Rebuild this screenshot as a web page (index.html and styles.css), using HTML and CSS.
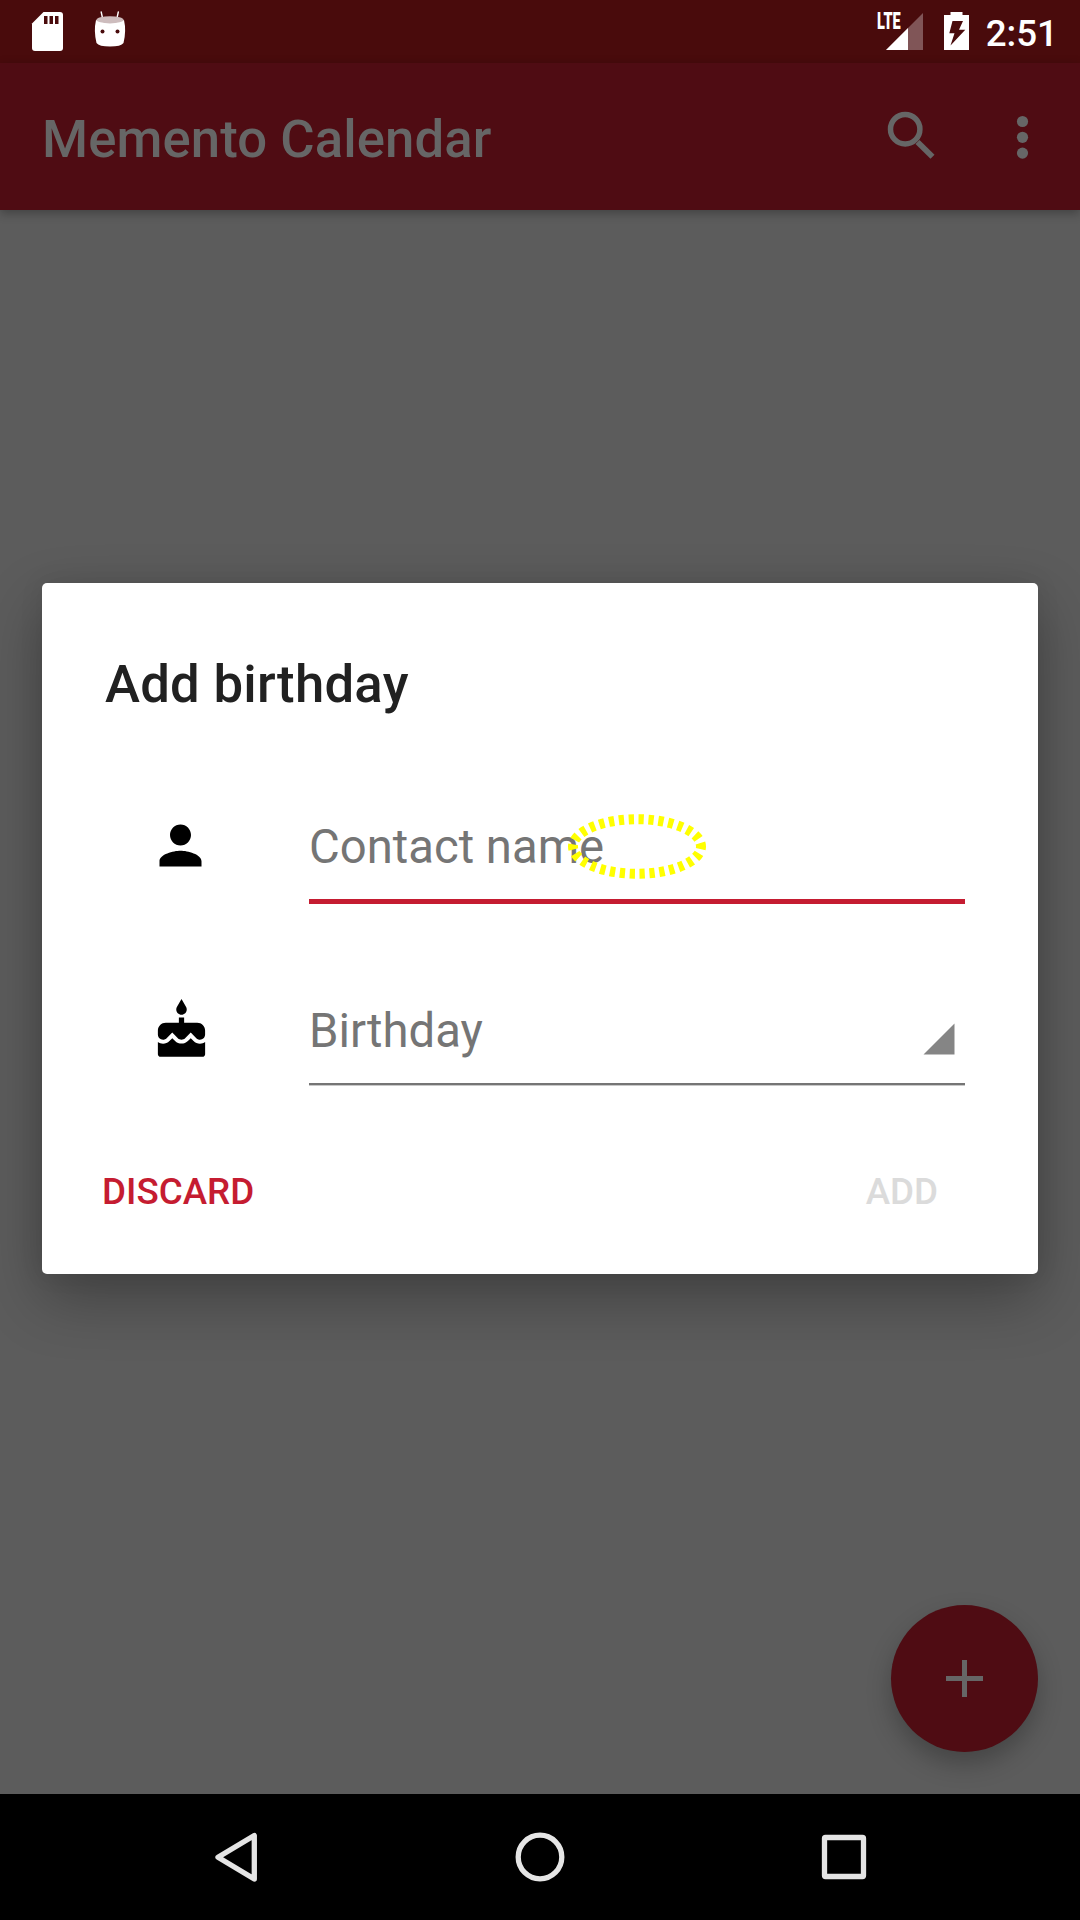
FILE: index.html
```html
<!DOCTYPE html>
<html lang="en">
<head>
<meta charset="utf-8">
<title>Memento Calendar</title>
<link rel="stylesheet" href="styles.css">
</head>
<body>
<div class="screen">
  <header class="status-bar">
    <div class="status-group notifications">
      <svg class="icon-sd" viewBox="0 0 31 39"><path d="M11.5 0H28q3 0 3 3v33q0 3-3 3H3q-3 0-3-3V11.500z" fill="#fff"/><path d="M12 4h3.500v8H12zM17.500 4H21v8h-3.500zM23 4h3.500v8H23z" fill="#490b0c"/></svg>
      <svg class="icon-droid" viewBox="0 0 32 36"><path d="M7.200 1l1.500 7M24.300 1l-1.500 7" stroke="#fff" stroke-width="1.400" stroke-linecap="round"/><path d="M2 9Q16 14.500 30 9Q32.500 20 29.500 32Q27 35.500 16 35.500T2.500 32Q-.5 20 2 9z" fill="#fff"/><ellipse cx="16" cy="8.800" rx="13.500" ry="3.600" fill="#cdbcbd"/><circle cx="8.500" cy="20.500" r="2" fill="#490b0c"/><circle cx="23.500" cy="20.500" r="2" fill="#490b0c"/></svg>
    </div>
    <div class="status-group system">
      <div class="signal">
        <svg viewBox="0 0 37 37"><path d="M0 37L37 0v37z" fill="#805557"/><path d="M0 37l22-22v22z" fill="#fff"/></svg>
        <span class="network">LTE</span>
      </div>
      <svg class="icon-battery" viewBox="0 0 25 38"><path d="M6.500 0h12v3H25v35H0V3h6.500z" fill="#fff"/><path d="M8.500 9H19l-4 8.700h6.300L6.500 33.500l4-12.300H5.300z" fill="#490b0c"/></svg>
      <span class="clock">2:51</span>
    </div>
  </header>
  <div class="app-bar">
    <h1 class="app-title">Memento Calendar</h1>
    <div class="actions">
      <svg class="icon-search" viewBox="0 0 48 48"><circle cx="17.700" cy="17.700" r="14.700" fill="none" stroke="#666" stroke-width="5.500"/><path d="M30 30.500L45 45.200" fill="none" stroke="#666" stroke-width="5.800"/></svg>
      <svg class="icon-more" viewBox="0 0 12 44"><g fill="#666"><circle cx="6" cy="6" r="5.600"/><circle cx="6" cy="21.800" r="5.600"/><circle cx="6" cy="37.600" r="5.600"/></g></svg>
    </div>
  </div>
  <main class="content">
    <section class="dialog">
      <h2 class="dialog-title">Add birthday</h2>
      <div class="row">
        <svg class="row-icon person" viewBox="0 0 24 24"><path d="M12 12c2.210 0 4-1.790 4-4s-1.790-4-4-4-4 1.790-4 4 1.790 4 4 4zm0 2c-2.670 0-8 1.340-8 4v2h16v-2c0-2.660-5.330-4-8-4z"/></svg>
        <div class="field focused">Contact name</div>
      </div>
      <div class="row">
        <svg class="row-icon" viewBox="0 0 24 24"><path d="M12 6c1.110 0 2-.9 2-2 0-.38-.1-.73-.29-1.030L12 0l-1.710 2.970c-.19.3-.29.65-.29 1.030 0 1.100.9 2 2 2zm4.600 9.990l-1.070-1.070-1.080 1.070c-1.300 1.300-3.580 1.310-4.890 0l-1.070-1.070-1.090 1.070C6.750 16.640 5.880 17 4.960 17c-.73 0-1.400-.23-1.960-.61V21c0 .55.45 1 1 1h16c.55 0 1-.45 1-1v-4.610c-.56.38-1.230.61-1.960.61-.92 0-1.790-.36-2.440-1.010zM18 9h-5V7h-2v2H6c-1.660 0-3 1.340-3 3v1.540c0 1.080.88 1.960 1.960 1.960.52 0 1.020-.2 1.380-.57l2.140-2.130 2.130 2.130c.74.74 2.030.74 2.770 0l2.140-2.130 2.130 2.130c.37.37.86.57 1.380.57 1.080 0 1.960-.88 1.960-1.960V12C21 10.340 19.660 9 18 9z"/></svg>
        <div class="field spinner">Birthday
          <svg class="caret" viewBox="0 0 32 32"><path d="M.5 31.500L31.500.5v31z" fill="#858585"/></svg>
        </div>
      </div>
      <div class="buttons">
        <button class="button">DISCARD</button>
        <button class="button disabled">ADD</button>
      </div>
      <svg class="highlight" viewBox="0 0 140 66"><ellipse cx="70" cy="33.500" rx="64" ry="27.300"/></svg>
    </section>
    <div class="fab"><svg viewBox="0 0 37 37"><path d="M16 0h5v16h16v5H21v16h-5V21H0v-5h16z" fill="#666"/></svg></div>
  </main>
  <nav class="nav-bar">
    <svg class="nav-icon" viewBox="0 0 56 56"><path d="M46.300 6.500v43.500L10 28.200z"/></svg>
    <svg class="nav-icon" viewBox="0 0 56 56"><circle cx="28" cy="28" r="21.800"/></svg>
    <svg class="nav-icon" viewBox="0 0 56 56"><rect x="8.500" y="8.500" width="39" height="39" rx="1"/></svg>
  </nav>
</div>
</body>
</html>
```
FILE: styles.css
```css
* { box-sizing: border-box; }
body { margin: 0; font-family: Roboto, sans-serif; }
svg { display: block; flex: none; overflow: visible; }
h1, h2 { margin: 0; font-weight: 500; }

.screen {
  display: flex;
  flex-direction: column;
  width: 1080px;
  height: 1920px;
  background: #5c5c5c;
  overflow: hidden;
}

.status-bar {
  display: flex;
  justify-content: space-between;
  height: 63px;
  padding: 0 22px 0 32px;
  background: #490b0c;
  color: #fff;
}
.status-group { display: flex; align-items: flex-start; }
.icon-sd { width: 31px; height: 39px; margin-top: 12px; }
.icon-droid { width: 32px; height: 36px; margin: 11px 0 0 31px; }
.signal { position: relative; width: 37px; height: 37px; margin-top: 13px; }
.network {
  position: absolute;
  left: -9px;
  top: -3px;
  font-size: 23px;
  line-height: 24px;
  font-weight: 900;
  transform: scaleX(.63);
  transform-origin: left;
}
.icon-battery { width: 25px; height: 38px; margin: 12px 0 0 21px; }
.clock {
  margin: 12px 0 0 17px;
  font-size: 36.75px;
  font-weight: 500;
  line-height: 44px;
}

.app-bar {
  position: relative;
  display: flex;
  justify-content: space-between;
  align-items: flex-start;
  height: 147px;
  padding: 0 51px 0 42px;
  background: #4f0c13;
  box-shadow: 0 3px 10px rgba(0, 0, 0, .3);
}
.app-title {
  padding-top: 45px;
  color: #666;
  font-size: 52.7px;
  line-height: 62px;
  letter-spacing: .08px;
}
.actions { display: flex; gap: 81px; }
.icon-search { width: 48px; height: 48px; margin-top: 48px; }
.icon-more { width: 12px; height: 44px; margin-top: 52px; }
.icon-search, .icon-more { transform: translate(-.5px, .5px); }

.content {
  flex: 1;
  display: flex;
  flex-direction: column;
  justify-content: space-between;
  padding: 373px 42px 42px;
}

.dialog {
  position: relative;
  height: 691px;
  padding: 69px 73px 0 50px;
  border-radius: 5px;
  background: #fff;
  box-shadow: 0 24px 60px rgba(0, 0, 0, .3), 0 0 24px rgba(0, 0, 0, .08);
}
.dialog-title {
  margin-left: 13px;
  color: #212121;
  font-size: 52.7px;
  line-height: 64px;
  letter-spacing: .25px;
}
.row { display: flex; align-items: flex-start; height: 182px; padding-left: 57px; }
.dialog-title + .row { margin-top: 98px; }
.row-icon { width: 63px; height: 63px; margin: 3px 96px 0 1px; }
.row-icon.person { margin: 0 97px 0 0; }
.field {
  position: relative;
  flex: 1;
  height: 90px;
  padding-top: 5px;
  color: #757575;
  font-size: 47.25px;
  line-height: 56px;
}
.field.focused { border-bottom: 5px solid #c51c31; }
.spinner { border-bottom: 2px solid #757575; height: 89px; padding-top: 7px; box-shadow: 0 1px #c8c8c8; }
.caret { position: absolute; right: 10px; top: 27px; width: 32px; height: 32px; }

.buttons {
  display: flex;
  justify-content: space-between;
  margin-top: -8px;
  padding: 0 27px 0 10px;
}
.button {
  padding: 0;
  border: 0;
  background: none;
  color: #c51c31;
  font: 500 36.75px/44px Roboto, sans-serif;
}
.button.disabled { color: #dbdbdb; }

/* Touch marker over the name field */
.highlight { position: absolute; left: 525px; top: 230px; width: 140px; height: 66px; }
.highlight ellipse {
  fill: none;
  stroke: #ff0;
  stroke-width: 10;
  stroke-dasharray: 5.3 4.6;
  stroke-dashoffset: 2.6;
}

.fab {
  display: flex;
  align-items: center;
  justify-content: center;
  align-self: flex-end;
  width: 147px;
  height: 147px;
  border-radius: 50%;
  background: #4f0c13;
  box-shadow: 0 12px 24px rgba(0, 0, 0, .25);
}
.fab svg { width: 37px; height: 37px; }

.nav-bar {
  position: relative;
  display: flex;
  align-items: center;
  justify-content: space-between;
  height: 126px;
  padding: 0 208px;
  background: #000;
}
.nav-icon {
  width: 56px;
  height: 56px;
  fill: none;
  stroke: #e5e5e5;
  stroke-width: 5.3;
  stroke-linejoin: round;
}
```
